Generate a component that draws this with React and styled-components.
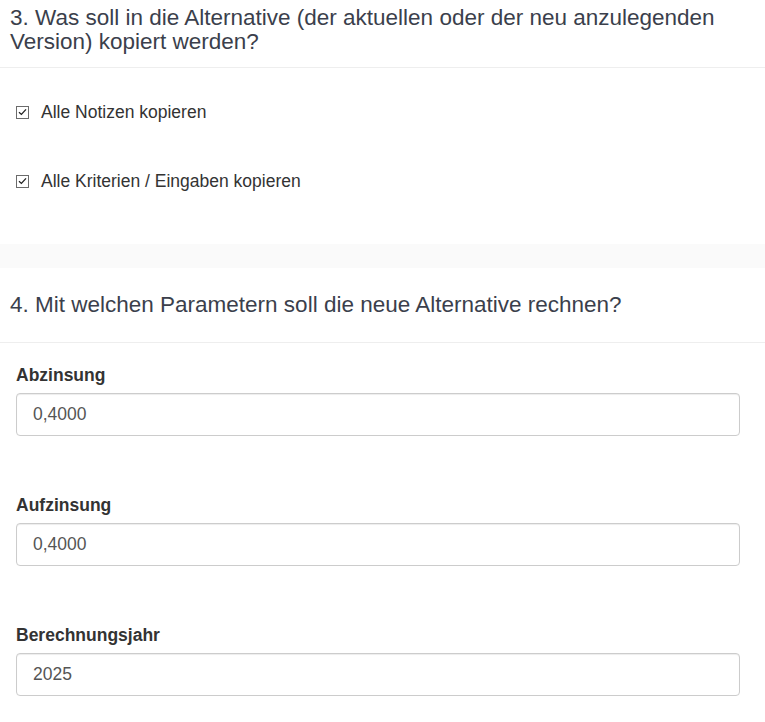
import styled, { createGlobalStyle } from 'styled-components'

const GlobalStyle = createGlobalStyle`
  html, body {
    margin: 0;
    padding: 0;
    background: #fafafa;
    font-family: "Liberation Sans", Arial, sans-serif;
  }
`

const Page = styled.div`
  display: flex;
  flex-direction: column;
  gap: 24px;
  width: 765px;
  height: 722px;
  overflow: hidden;
`

const Panel = styled.section`
  background: #fff;
`

const PanelHeading = styled.h3`
  margin: 0;
  padding: ${props => props.$pad || '25px 10px 25px'};
  font-size: 22.5px;
  line-height: 24px;
  font-weight: 400;
  color: #3b3f4c;
  border-bottom: 1px solid #eeeeee;
`

const PanelBody = styled.div`
  display: flex;
  flex-direction: column;
  padding: ${props => props.$pad || '22px 25px 0 16px'};
`

const CheckRow = styled.label`
  display: flex;
  align-items: center;
  gap: 12px;
  height: 20px;
  margin-bottom: ${props => props.$mb || 49}px;
  font-size: 17.5px;
  color: #333;
`

const Box = styled.span`
  display: flex;
  align-items: center;
  justify-content: center;
  box-sizing: border-box;
  width: 13px;
  height: 13px;
  border: 1px solid #6b6b6b;
  background: #fff;
`

const FormGroup = styled.div`
  display: flex;
  flex-direction: column;
  gap: 8px;
  margin-bottom: 59px;
`

const Label = styled.label`
  font-size: 17.5px;
  line-height: 20px;
  font-weight: 700;
  color: #333;
`

const Input = styled.input`
  box-sizing: border-box;
  width: 100%;
  height: 43px;
  padding: 0 16px;
  border: 1px solid #cccccc;
  border-radius: 4px;
  box-shadow: inset 0 1px 1px rgba(0, 0, 0, .075);
  font-family: inherit;
  font-size: 17.5px;
  color: #555;
  background: #fff;
  outline: none;
`

const Check = ({ label, mb }) => (
  <CheckRow $mb={mb}>
    <Box>
      <svg width="9" height="8" viewBox="0 0 9 8">
        <path d="M1 4.2 L3.4 6.4 L8 1.4" fill="none" stroke="#222" strokeWidth="1.3" />
      </svg>
    </Box>
    {label}
  </CheckRow>
)

const params = [
  { label: 'Abzinsung', value: '0,4000' },
  { label: 'Aufzinsung', value: '0,4000' },
  { label: 'Berechnungsjahr', value: '2025' }
]

const App = () => (
  <>
    <GlobalStyle />
    <Page>
      <Panel>
        <PanelHeading $pad="6px 10px 13px">
          3. Was soll in die Alternative (der aktuellen oder der neu anzulegenden Version) kopiert werden?
        </PanelHeading>
        <PanelBody $pad="34px 25px 0 16px">
          <Check label="Alle Notizen kopieren" />
          <Check label="Alle Kriterien / Eingaben kopieren" mb={53} />
        </PanelBody>
      </Panel>
      <Panel>
        <PanelHeading>4. Mit welchen Parametern soll die neue Alternative rechnen?</PanelHeading>
        <PanelBody>
          {params.map(p => (
            <FormGroup key={p.label}>
              <Label>{p.label}</Label>
              <Input defaultValue={p.value} />
            </FormGroup>
          ))}
        </PanelBody>
      </Panel>
    </Page>
  </>
)

export default App
